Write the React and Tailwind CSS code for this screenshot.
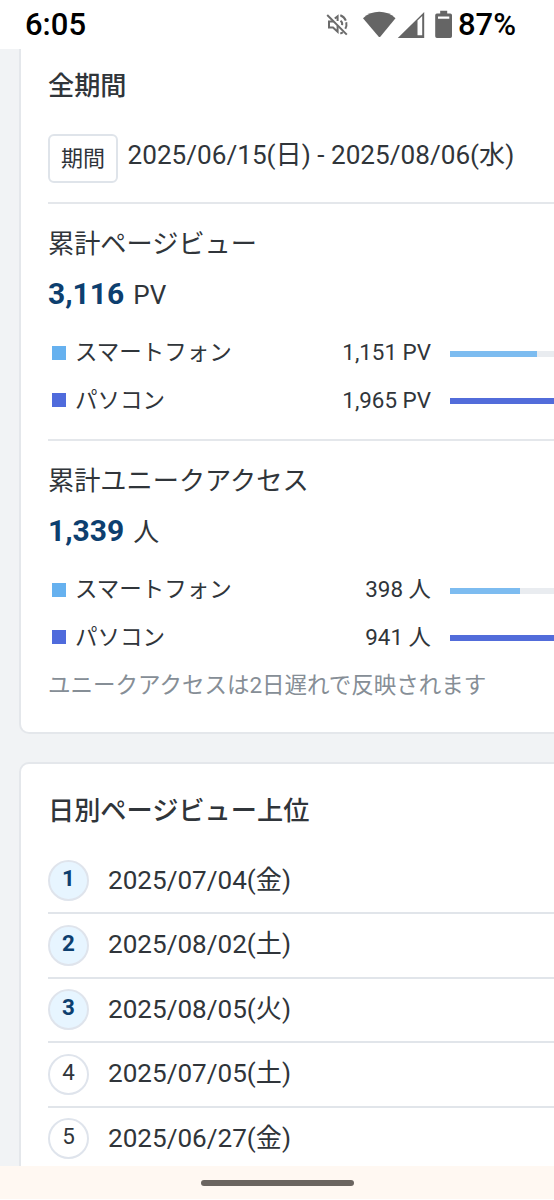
import React from "react";
import { clsx } from "clsx";

const devices = [
  { label: "スマートフォン", square: "bg-[#66b1ef]", bar: "bg-[#7dbcf0]" },
  { label: "パソコン", square: "bg-[#4f6bdc]", bar: "bg-[#526cda]" },
];

const pageViews = { total: 3116, unit: "PV", counts: [1151, 1965] };
const uniques = { total: 1339, unit: "人", counts: [398, 941] };

const ranking = [
  "2025/07/04(金)",
  "2025/08/02(土)",
  "2025/08/05(火)",
  "2025/07/05(土)",
  "2025/06/27(金)",
];

const StatusBar = () => (
  <header className="flex h-[49px] shrink-0 items-center bg-white pl-[25px] text-[31px] font-medium leading-none text-black">
    <span>6:05</span>
    <svg className="ml-auto h-[49px] w-[132px]" viewBox="0 0 132 49">
      {/* muted speaker */}
      <g fill="none" stroke="#6b6b6b" strokeWidth="2">
        <path d="M7.500 21.500H3v6h4l4.600 4.200v-6" />
        <path d="M8.800 18.600l2.800-2.300v4.800" />
        <path d="M14.500 20.800a4.200 4.200 0 0 1 1.600 4.300" />
        <path d="M14.300 15.200a9.600 9.600 0 0 1 5 13.600" strokeDasharray="8 1.500" />
        <path d="M14.300 33.600l2.600-1.300" />
        <path d="M1.200 15L20.800 34.600" />
      </g>
      <path d="M52.500 36.500L37 18.200C46 9.700 60.500 9.700 69.500 18.200L54.500 36.500Q53.500 37.600 52.500 36.500z" fill="#656565" />
      <path d="M71.800 38L98.200 12V38zM91.500 20.500V35.200H96.200V16z" fill="#656565" fillRule="evenodd" />
      <path d="M114.200 10.800h7v2.800h3.100q1.700 0 1.700 1.700v20.900q0 1.700-1.700 1.700H110.900q-1.700 0-1.700-1.700V15.300q0-1.700 1.700-1.700h3.300zM112 16.500v2.200h11.300v-2.200z" fill="#656565" fillRule="evenodd" />
    </svg>
    <span className="w-[96px]">87%</span>
  </header>
);

const Card = ({ className, children }) => (
  <section
    className={clsx(
      "ml-[19px] w-[697px] border-2 border-[#e4e7eb] bg-white px-[27px]",
      className,
    )}
  >
    {children}
  </section>
);

const Stats = ({ title, data, className }) => (
  <div className={clsx("border-t-2 border-[#e4e7eb]", className)}>
    <h3 className="mt-[22px] h-[36px] text-[26.200px] leading-[36px]">{title}</h3>
    <p className="mt-[11px] flex h-[42px] items-baseline gap-[9px] text-[26px] leading-[42px]">
      <strong className="text-[30px] font-bold text-[#0d3f6f]">
        {data.total.toLocaleString("en-US")}
      </strong>
      <span>{data.unit}</span>
    </p>
    <ul className="mt-[14px]">
      {devices.map((device, i) => (
        <li key={device.label} className="flex h-[47.500px] items-center text-[22.400px]">
          <span className={clsx("ml-[4px] h-[14px] w-[14px]", device.square)} />
          <span className="mt-px ml-[9px] w-[200px] text-[22.500px]">{device.label}</span>
          <span className="mt-px w-[156px] text-right">
            {data.counts[i].toLocaleString("en-US")} {data.unit}
          </span>
          <div className="mt-[2px] ml-[19px] h-[6px] w-[236px] bg-[#e9ecf0]">
            <div
              className={clsx("h-full", device.bar)}
              style={{ width: `${(data.counts[i] / data.total) * 100}%` }}
            />
          </div>
        </li>
      ))}
    </ul>
  </div>
);

const RankRow = ({ rank, date }) => (
  <li className="flex h-[64.500px] items-center border-b-2 border-[#e1e5ea]">
    <span
      className={clsx(
        "flex h-[41px] w-[41px] justify-center rounded-full border-2 border-[#dfe4ec] text-[22.400px] leading-[32px]",
        rank <= 3 ? "bg-[#e7f5ff] font-bold text-[#0d3f6f]" : "bg-white",
      )}
    >
      {rank}
    </span>
    <span className="mb-px ml-[19px] text-[26.100px]">{date}</span>
  </li>
);

const App = () => {
  return (
    <div className="flex h-[1200px] w-[554px] flex-col overflow-hidden bg-[#f1f3f5] font-['Roboto','Noto_Sans_CJK_JP',sans-serif] text-[#30353a]">
      <StatusBar />

      <main className="min-h-0 flex-1 overflow-hidden">
        <Card className="h-[685px] rounded-b-[10px] border-t-0">
          <h2 className="pt-[18px] text-[26.200px] font-medium leading-[38px]">全期間</h2>
          <div className="mt-[29px] flex h-[49px] items-center">
            <span className="flex h-[49px] w-[70px] items-center justify-center rounded-[6px] border-2 border-[#dfe4ea] text-[22px]">
              期間
            </span>
            <span className="mb-[5px] ml-[9.500px] text-[26.150px]">
              2025/06/15(日) - 2025/08/06(水)
            </span>
          </div>

          <Stats title="累計ページビュー" data={pageViews} className="mt-[19px]" />
          <Stats title="累計ユニークアクセス" data={uniques} className="mt-[15px]" />
          <p className="pt-px text-[22.500px] leading-[46px] text-[#868e96]">
            ユニークアクセスは2日遅れで反映されます
          </p>
        </Card>

        <Card className="mt-[28px] h-[500px] rounded-t-[10px]">
          <h2 className="mt-[28px] text-[26.200px] font-medium leading-[38px]">
            日別ページビュー上位
          </h2>
          <ul className="mt-[19.500px]">
            {ranking.map((date, i) => (
              <RankRow key={date} rank={i + 1} date={date} />
            ))}
          </ul>
        </Card>
      </main>

      {/* Gesture bar */}
      <footer className="flex h-[34px] shrink-0 items-center justify-center border-b border-white bg-[#fff8f2]">
        <div className="h-[6px] w-[153px] rounded-full bg-[#6b6560]" />
      </footer>
    </div>
  );
};

export default App;
